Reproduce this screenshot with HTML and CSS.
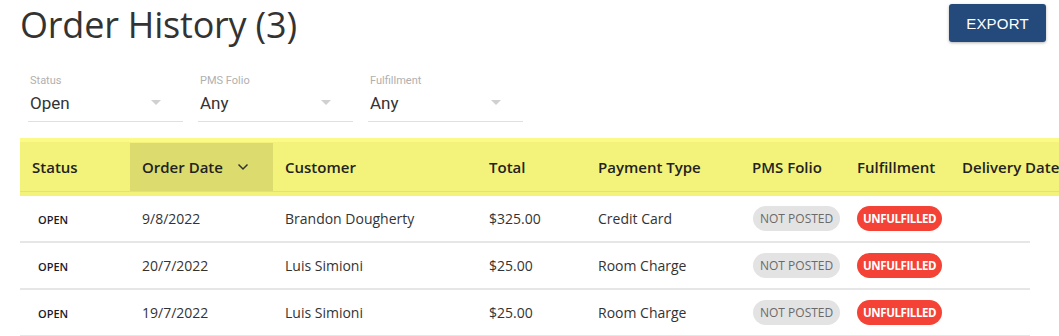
FILE: index.html
```html
<!DOCTYPE html>
<html>
<head>
<meta charset="utf-8">
<link rel="stylesheet" href="styles.css">
</head>
<body>
<div class="page">
  <header class="top">
    <h1 class="title">Order History (3)</h1>
    <button class="export">EXPORT</button>
  </header>

  <div class="filters">
    <div class="field">
      <div class="field-label">Status</div>
      <div class="field-value">Open<span class="caret"></span></div>
    </div>
    <div class="field">
      <div class="field-label">PMS Folio</div>
      <div class="field-value">Any<span class="caret"></span></div>
    </div>
    <div class="field">
      <div class="field-label">Fulfillment</div>
      <div class="field-value">Any<span class="caret"></span></div>
    </div>
  </div>

  <div class="table">
    <div class="thead">
      <div class="row head-row">
        <div class="cell">Status</div>
        <div class="cell sorted">Order Date
          <svg class="chev" width="12" height="8" viewBox="0 0 12 8"><path d="M1.5 1.5 L6 6 L10.5 1.5" fill="none" stroke="#333" stroke-width="1.5"/></svg>
        </div>
        <div class="cell">Customer</div>
        <div class="cell">Total</div>
        <div class="cell">Payment Type</div>
        <div class="cell">PMS Folio</div>
        <div class="cell">Fulfillment</div>
        <div class="cell">Delivery Date</div>
      </div>
    </div>
    <div class="tbody">
      <div class="row body-row">
        <div class="cell"><span class="status">OPEN</span></div>
        <div class="cell">9/8/2022</div>
        <div class="cell">Brandon Dougherty</div>
        <div class="cell">$325.00</div>
        <div class="cell">Credit Card</div>
        <div class="cell"><span class="pill grey">NOT POSTED</span></div>
        <div class="cell"><span class="pill red">UNFULFILLED</span></div>
        <div class="cell"></div>
      </div>
      <div class="row body-row">
        <div class="cell"><span class="status">OPEN</span></div>
        <div class="cell">20/7/2022</div>
        <div class="cell">Luis Simioni</div>
        <div class="cell">$25.00</div>
        <div class="cell">Room Charge</div>
        <div class="cell"><span class="pill grey">NOT POSTED</span></div>
        <div class="cell"><span class="pill red">UNFULFILLED</span></div>
        <div class="cell"></div>
      </div>
      <div class="row body-row">
        <div class="cell"><span class="status">OPEN</span></div>
        <div class="cell">19/7/2022</div>
        <div class="cell">Luis Simioni</div>
        <div class="cell">$25.00</div>
        <div class="cell">Room Charge</div>
        <div class="cell"><span class="pill grey">NOT POSTED</span></div>
        <div class="cell"><span class="pill red">UNFULFILLED</span></div>
        <div class="cell"></div>
      </div>
    </div>
  </div>
</div>
</body>
</html>
```

FILE: styles.css
```css
* { box-sizing: border-box; }
html, body {
  margin: 0;
  padding: 0;
  background: #fff;
  overflow: hidden;
}
body {
  font-family: "Open Sans", "Noto Sans", sans-serif;
  color: #333;
  width: 1059px;
  height: 336px;
}
.page {
  width: 1059px;
}
.top {
  display: flex;
  justify-content: space-between;
  align-items: flex-start;
  padding: 3px 13px 0 20px;
  height: 66px;
}
.title {
  margin: 0;
  font-weight: 400;
  font-size: 36px;
  line-height: 44px;
  color: #333;
  letter-spacing: -0.2px;
}
.export {
  margin-top: 1px;
  width: 97px;
  height: 38px;
  border: none;
  border-radius: 3px;
  background: #234a7b;
  color: #fff;
  font-family: "Liberation Sans", Arial, sans-serif;
  font-size: 15px;
  letter-spacing: 0.2px;
  box-shadow: 0 1px 3px rgba(0,0,0,0.3);
}
.filters {
  display: flex;
  gap: 15px;
  padding-left: 28px;
  height: 72px;
}
.field {
  width: 155px;
  height: 56px;
  border-bottom: 1px solid #e0e0e0;
  padding-left: 2px;
  font-family: Roboto, "Liberation Sans", sans-serif;
}
.field-label {
  font-size: 11px;
  color: #b0b0b0;
  line-height: 14px;
  margin-top: 8px;
}
.field-value {
  position: relative;
  font-size: 17px;
  color: #333;
  line-height: 24px;
  margin-top: 3px;
}
.caret {
  position: absolute;
  right: 22px;
  top: 9px;
  width: 0;
  height: 0;
  border-left: 5px solid transparent;
  border-right: 5px solid transparent;
  border-top: 5px solid #d0d0d0;
}
.table {
  margin-left: 20px;
  width: 1100px;
}
.thead {
  background: #f3f27a;
  border-top: 4px solid #fbfa86;
  padding-top: 1px;
  height: 58px;
}
.row {
  display: grid;
  grid-template-columns: 110px 143px 204px 109px 154px 105px 105px 170px;
  align-items: center;
}
.head-row {
  height: 49px;
  border-bottom: 1px solid #e2e17a;
  font-weight: 600;
  font-size: 15px;
  color: #222;
}
.head-row .cell {
  height: 100%;
  display: flex;
  align-items: center;
  padding-left: 12px;
  white-space: nowrap;
}
.head-row .sorted {
  background: #dcdb6e;
}
.chev {
  margin-left: 14px;
  margin-top: -1px;
}
.tbody {
  width: 1010px;
}
.body-row {
  height: 47px;
  border-bottom: 2px solid #e6e6e6;
  font-size: 14px;
  color: #333;
}
.body-row .cell {
  padding-left: 12px;
  white-space: nowrap;
}
.status {
  font-size: 11px;
  font-weight: 600;
  color: #1a1a2a;
  padding-left: 6px;
}
.pill {
  display: inline-block;
  height: 25px;
  line-height: 25px;
  border-radius: 13px;
  font-size: 12px;
  padding: 0 7px;
}
.pill.grey {
  background: #e3e3e3;
  color: #6a6a6a;
  margin-left: 1px;
}
.pill.red {
  background: #f44336;
  color: #fff;
  font-weight: 700;
  font-size: 11.5px;
  letter-spacing: -0.4px;
  padding: 0 6px;
}
```
